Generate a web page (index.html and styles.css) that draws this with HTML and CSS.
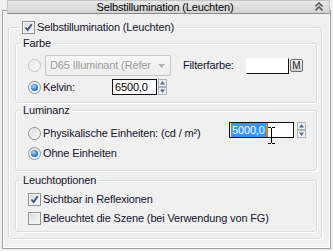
FILE: index.html
```html
<!DOCTYPE html>
<html lang="de">
<head>
<meta charset="UTF-8" />
<title>Selbstillumination</title>
<link rel="stylesheet" href="styles.css">
</head>
<body>

<div class="rollout">
  <div class="rollout-head">
    <span class="rollout-title">Selbstillumination (Leuchten)</span>
    <svg class="collapse" width="8" height="10" viewBox="0 0 8 10">
      <path d="M0.5 4.5 L4 1 L7.5 4.5 M0.5 8.5 L4 5 L7.5 8.5" fill="none" stroke="#5a5a5a" stroke-width="1.6"/>
    </svg>
  </div>

  <fieldset class="group outer">
    <legend><span class="opt"><span class="check on"></span><span class="txt">Selbstillumination (Leuchten)</span></span></legend>

    <fieldset class="group farbe">
      <legend>Farbe</legend>
      <div class="row row-combo">
        <span class="radio off"></span>
        <div class="combo">
          <span class="combo-text">D65 Illuminant (Refer</span>
          <svg width="7" height="4" viewBox="0 0 7 4"><path d="M0 0H7L3.5 4Z" fill="#b4b4b4"/></svg>
        </div>
        <span class="lbl lbl-filter">Filterfarbe:</span>
        <span class="swatch"></span>
        <span class="mbtn">M</span>
      </div>
      <div class="row">
        <span class="radio on"></span>
        <span class="txt lbl-kelvin">Kelvin:</span>
        <span class="spinner">
          <span class="field field-kelvin">6500,0</span>
          <svg class="arrows" width="9" height="16" viewBox="0 0 9 16">
            <rect x="0.5" y="0.5" width="8" height="7" fill="#eef0f3" stroke="#aab2bd"/>
            <rect x="0.5" y="8.5" width="8" height="7" fill="#eef0f3" stroke="#aab2bd"/>
            <path d="M4.5 2 L7 5.5 H2 Z" fill="#4d6c9e"/>
            <path d="M2 10.5 H7 L4.5 14 Z" fill="#4d6c9e"/>
          </svg>
        </span>
      </div>
    </fieldset>

    <fieldset class="group luminanz">
      <legend>Luminanz</legend>
      <div class="row">
        <span class="radio"></span>
        <span class="txt lbl-phys">Physikalische Einheiten: (cd / m²)</span>
        <span class="spinner spinner-lum">
          <span class="field field-lum"><span class="sel">5000,0</span><span class="caret"></span></span>
          <svg class="arrows arrows-lum" width="9" height="16" viewBox="0 0 9 16">
            <rect x="0.5" y="0.5" width="8" height="7" fill="#eef0f3" stroke="#aab2bd"/>
            <rect x="0.5" y="8.5" width="8" height="7" fill="#eef0f3" stroke="#aab2bd"/>
            <path d="M4.5 2 L7 5.5 H2 Z" fill="#4d6c9e"/>
            <path d="M2 10.5 H7 L4.5 14 Z" fill="#4d6c9e"/>
          </svg>
          <svg class="ibeam" width="7" height="17" viewBox="0 0 7 17">
            <path d="M0 0.5H3M4 0.5H7M3.5 1V16M0 16.5H3M4 16.5H7" fill="none" stroke="#000"/>
          </svg>
        </span>
      </div>
      <div class="row">
        <span class="radio on"></span>
        <span class="txt">Ohne Einheiten</span>
      </div>
    </fieldset>

    <fieldset class="group light">
      <legend>Leuchtoptionen</legend>
      <div class="row">
        <span class="check on"></span>
        <span class="txt">Sichtbar in Reflexionen</span>
      </div>
      <div class="row">
        <span class="check"></span>
        <span class="txt">Beleuchtet die Szene (bei Verwendung von FG)</span>
      </div>
    </fieldset>
  </fieldset>
</div>

</body>
</html>
```

FILE: styles.css
```css
/* Base */
* {
  box-sizing: border-box;
}
body {
  margin: 0;
  background: #f0f0f0;
  color: #14142a;
  font-family: "Liberation Sans", Arial, sans-serif;
  font-size: 11px;
  line-height: 13px;
  letter-spacing: -0.15px;
}

/* Rollout frame */
.rollout {
  margin: 10px 2px 0;
  border: 1px solid #a0a0a0;
  box-shadow: inset 1px 1px 0 #fff, inset -1px -1px 0 #fff;
}
.rollout-head {
  display: flex;
  align-items: center;
  height: 14px;
  margin: -11px 0 0 4px;
  padding-left: 7px;
  background: linear-gradient(#e8e8e8, #d3d3d3);
  border: 1px solid #c4c4c4;
  border-bottom-color: #8a8a8a;
  color: #000;
}
.rollout-title {
  flex: 1;
  text-align: center;
}
.collapse {
  margin-right: 6px;
}

/* Group boxes */
.group {
  min-width: 0;
  margin: 0;
  padding: 0 0 0 5px;
  border: 1px solid #d5dfe5;
  border-radius: 3px;
  box-shadow: 1px 1px 0 #fff, inset 1px 1px 0 #fff;
}
.group legend {
  height: 13px;
  padding: 0 2px;
  background: #f0f0f0;
}
.outer {
  margin: 7px 8px 9px 5px;
  padding: 3px 4px 6px 6px;
}
.outer > legend {
  margin-left: 4px;
  padding: 0 3px;
}
.farbe {
  padding-top: 5px;
  padding-bottom: 5px;
}
.luminanz {
  margin-top: 1px;
  padding-top: 6px;
  padding-bottom: 7px;
}
.light {
  margin-top: 3px;
  padding-top: 3px;
  padding-bottom: 3px;
}

/* Rows */
.row {
  display: flex;
  align-items: center;
  height: 20px;
  margin-left: 7px;
}
.row-combo {
  height: 21px;
}
.farbe .row + .row {
  margin-top: 1px;
}
.light .row {
  height: 19px;
}
.opt {
  display: inline-flex;
  align-items: center;
}
.txt {
  margin-left: 2px;
  white-space: nowrap;
}

/* Radio buttons and checkboxes */
.radio, .check {
  flex: none;
  width: 13px;
  height: 13px;
  border: 1px solid #8e8f8f;
  background: linear-gradient(135deg, #d6d9dc, #fbfbfb);
  box-shadow: inset 0 0 0 1px #f5f5f5;
}
.radio {
  border-radius: 50%;
}
.radio.on::after {
  content: "";
  display: block;
  width: 7px;
  height: 7px;
  margin: 2px;
  border-radius: 50%;
  background: radial-gradient(circle at 40% 35%, #a6e0ff, #2a84cc 55%, #0f4c88);
}
.radio.off {
  border-color: #c3c3c3;
  background: linear-gradient(135deg, #e8e8e8, #f8f8f8);
}
.check.on {
  background-image: url("data:image/svg+xml,%3Csvg xmlns='http://www.w3.org/2000/svg' width='11' height='11'%3E%3Cpath d='M2.5 5.5 L4.6 8 L8.8 2.2' fill='none' stroke='%233b4f80' stroke-width='1.9'/%3E%3C/svg%3E"), linear-gradient(135deg, #d6d9dc, #fbfbfb);
}

/* Colour controls */
.combo {
  display: flex;
  align-items: center;
  width: 126px;
  height: 21px;
  margin-left: 4px;
  padding-left: 4px;
  border: 1px solid #c6c6c6;
  border-radius: 2px;
  background: linear-gradient(#f7f7f7, #ededed);
  color: #9c9c9c;
}
.combo-text {
  width: 101px;
  overflow: hidden;
  white-space: nowrap;
}
.combo svg {
  margin-left: auto;
  margin-right: 5px;
}
.lbl-filter {
  width: 63px;
  margin-left: 12px;
  white-space: nowrap;
}
.swatch {
  width: 43px;
  height: 16px;
  background: #fff;
  border: 1px solid;
  border-color: #fff #111 #111 #fff;
}
.mbtn {
  width: 13px;
  height: 13px;
  margin-left: 1px;
  border: 1px solid #6e6e6e;
  border-radius: 2px;
  background: linear-gradient(#f4f4f4, #d2d2d2);
  color: #1a1a1a;
  font-size: 10px;
  line-height: 11px;
  text-align: center;
  letter-spacing: 0;
}

/* Spinners */
.lbl-kelvin {
  width: 69px;
}
.lbl-phys {
  width: 186px;
}
.spinner {
  position: relative;
  display: flex;
  align-items: center;
}
.spinner-lum {
  align-self: flex-start;
  margin-top: -1px;
}
.field {
  display: flex;
  align-items: center;
  height: 16px;
  padding-left: 2px;
  border: 1px solid #111;
  background: #fff;
  color: #000;
  line-height: 14px;
}
.field-kelvin {
  width: 45px;
}
.field-lum {
  width: 65px;
  padding-left: 1px;
}
.sel {
  padding: 0 1px;
  background: #3399ff;
  color: #fff;
}
.caret {
  width: 2px;
  height: 14px;
  background: #e2761c;
}
.arrows {
  margin-left: 1px;
}
.arrows-lum {
  margin-left: 3px;
}
.ibeam {
  position: absolute;
  left: 39px;
  top: 5px;
}
```
